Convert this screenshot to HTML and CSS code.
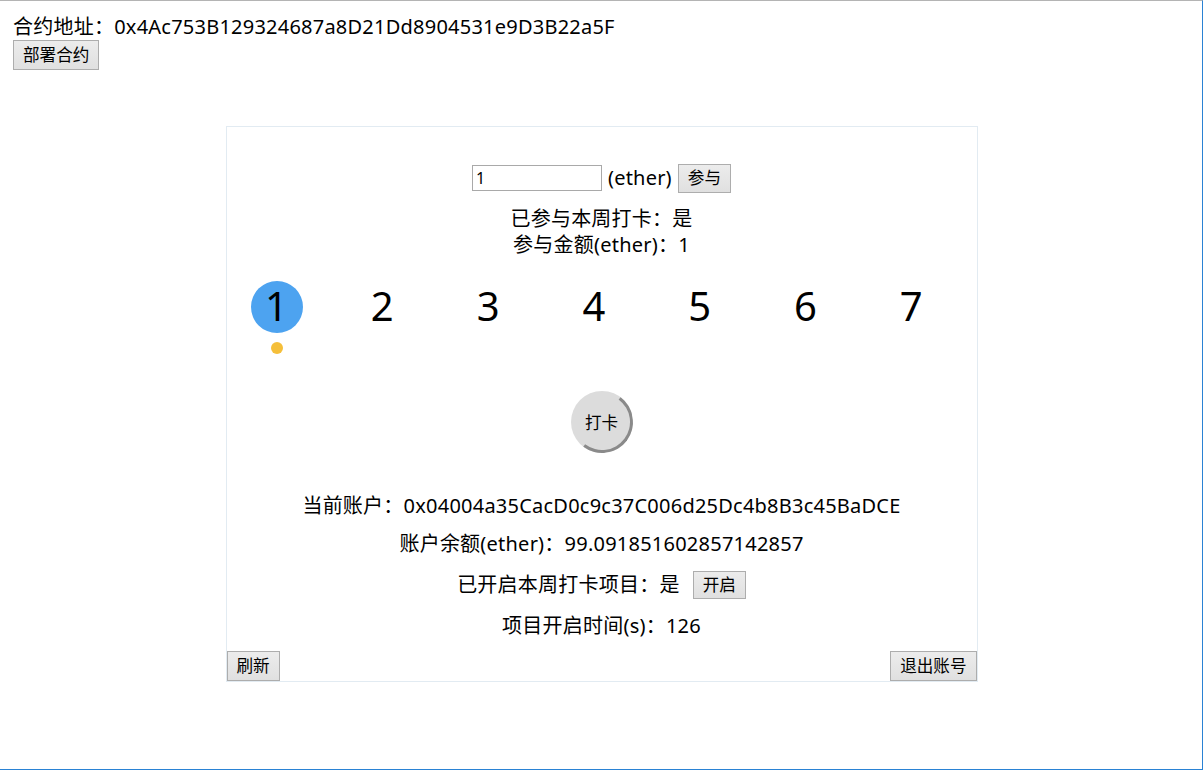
FILE: index.html
```html
<!DOCTYPE html>
<html lang="zh-CN">
<head>
<meta charset="utf-8">
<title>打卡</title>
<link rel="stylesheet" href="styles.css">
</head>
<body>
<div class="window">
  <div class="addr">合约地址：0x4Ac753B129324687a8D21Dd8904531e9D3B22a5F</div>
  <button class="btn btn-deploy">部署合约</button>

  <div class="card">
    <div class="join-row">
      <input class="amount" type="text" value="1">
      <span class="unit">(ether)</span>
      <button class="btn">参与</button>
    </div>
    <div class="info">
      <div class="line">已参与本周打卡：是</div>
      <div class="line">参与金额(ether)：1</div>
    </div>

    <div class="days">
      <div class="day"><div class="num active">1</div><div class="dot"></div></div>
      <div class="day"><div class="num">2</div></div>
      <div class="day"><div class="num">3</div></div>
      <div class="day"><div class="num">4</div></div>
      <div class="day"><div class="num">5</div></div>
      <div class="day"><div class="num">6</div></div>
      <div class="day"><div class="num">7</div></div>
    </div>

    <div class="punch-wrap">
      <button class="punch">打卡</button>
    </div>

    <div class="line account">当前账户：0x04004a35CacD0c9c37C006d25Dc4b8B3c45BaDCE</div>
    <div class="line balance">账户余额(ether)：99.091851602857142857</div>
    <div class="open-row">已开启本周打卡项目：是<button class="btn btn-open">开启</button></div>
    <div class="line time">项目开启时间(s)：126</div>

    <div class="bottom">
      <button class="btn btn-bottom">刷新</button>
      <button class="btn btn-bottom">退出账号</button>
    </div>
  </div>
</div>
</body>
</html>
```

FILE: styles.css
```css
html, body {
  margin: 0;
  padding: 0;
  background: #ffffff;
}

body {
  font-family: "Noto Sans", "Noto Sans CJK SC", sans-serif;
  color: #000000;
}

.window {
  width: 1203px;
  height: 770px;
  box-sizing: border-box;
  border-top: 1px solid #b4b4b4;
  border-right: 1px solid #2a82d4;
  border-bottom: 1px solid #2a82d4;
  padding: 13px 12px 0 13px;
}

.addr {
  font-size: 20px;
  line-height: 26px;
  letter-spacing: 0.23px;
  white-space: nowrap;
}

.btn {
  font-family: "Noto Sans", "Noto Sans CJK SC", sans-serif;
  font-size: 16.6px;
  line-height: 26px;
  height: 29px;
  padding: 0 9px;
  margin: 0;
  color: #000000;
  background: linear-gradient(#ececec, #e0e0e0);
  border: 1px solid #adadad;
  border-radius: 0;
  box-sizing: border-box;
  white-space: nowrap;
  display: inline-flex;
  align-items: center;
  justify-content: center;
}

.btn-deploy {
  display: flex;
  height: 30px;
}

.card {
  width: 752px;
  box-sizing: border-box;
  margin: 56px auto 0;
  border: 1px solid #e2ebf2;
  padding-top: 36px;
  display: flex;
  flex-direction: column;
  align-items: stretch;
}

.join-row {
  height: 30px;
  display: flex;
  align-items: center;
  justify-content: center;
  gap: 6px;
  font-size: 20px;
}

.amount {
  width: 130px;
  height: 26px;
  box-sizing: border-box;
  border: 1px solid #a9a9a9;
  padding: 0 3px;
  margin: 0;
  font-family: "Noto Sans", sans-serif;
  font-size: 16px;
  color: #000;
  outline: none;
}

.unit {
  line-height: 26px;
  letter-spacing: 0.2px;
}

.info {
  margin-top: 13px;
}

.line {
  font-size: 20px;
  line-height: 26px;
  letter-spacing: 0.23px;
  text-align: center;
  white-space: nowrap;
}

.days {
  margin-top: 23px;
  display: flex;
  align-items: flex-start;
  gap: 53.8px;
  padding-left: 24px;
}

.day {
  width: 52px;
  display: flex;
  flex-direction: column;
  align-items: center;
}

.num {
  width: 52px;
  height: 52px;
  border-radius: 50%;
  font-size: 40px;
  line-height: 50px;
  text-align: center;
}

.num.active {
  background: #4da3f0;
}

.dot {
  width: 12px;
  height: 12px;
  margin-top: 9px;
  border-radius: 50%;
  background: #f5bf3a;
}

.punch-wrap {
  margin-top: 37px;
  display: flex;
  justify-content: center;
}

.punch {
  position: relative;
  width: 62px;
  height: 62px;
  box-sizing: border-box;
  border-radius: 50%;
  border: none;
  background: #dcdcdc;
  font-family: "Noto Sans CJK SC", sans-serif;
  font-size: 16.6px;
  color: #000;
  padding: 0;
}

.punch::before {
  content: "";
  position: absolute;
  inset: 0;
  border-radius: 50%;
  border: 3px solid transparent;
  border-right-color: #8a8a8a;
  border-bottom-color: #8a8a8a;
  transform: rotate(-8deg);
}

.account {
  margin-top: 40px;
}

.balance {
  margin-top: 12px;
}

.open-row {
  margin-top: 13px;
  height: 30px;
  display: flex;
  align-items: center;
  justify-content: center;
  font-size: 20px;
  line-height: 26px;
  letter-spacing: 0.23px;
  white-space: nowrap;
}

.btn-open {
  height: 28px;
  margin-left: 13px;
  letter-spacing: 0;
}

.time {
  margin-top: 13px;
}

.bottom {
  margin-top: 12px;
  display: flex;
  justify-content: space-between;
}

.btn-bottom {
  height: 30px;
}
```
